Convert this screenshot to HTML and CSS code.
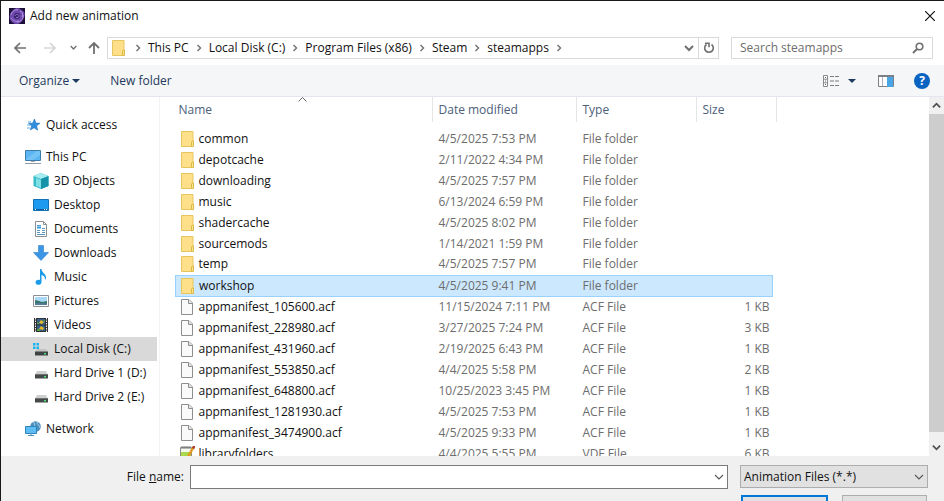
FILE: index.html
```
<!DOCTYPE html>
<html lang="en">

<head>
    <meta charset="UTF-8">
    <meta name="viewport" content="width=device-width, initial-scale=1.0">
    <title>Add new animation</title>
    <link rel="stylesheet" href="styles.css">
</head>

<body>
    <!-- shared icons -->
    <svg class="sprite" aria-hidden="true">
        <symbol id="folder" viewBox="0 0 14 16">
            <path d="M.5.5h11.500v15H.5z" fill="#ffe08a" stroke="#e6c65c" />
            <path d="M10.500 15.500v-4.500l1-1h1v5.500z" fill="#ffe38f" stroke="#dcb944" />
        </symbol>
        <symbol id="file" viewBox="0 0 12 16">
            <path d="M.5.5h7.500l3.500 3.500v11.500H.5z" fill="#fafafa" stroke="#8e8e8e" />
            <path d="M7.500.5v4h4" fill="#e4e4e4" stroke="#8e8e8e" />
        </symbol>
        <symbol id="drive" viewBox="0 0 16 16">
            <path d="M4 6h9l2 3.500H2z" fill="#cfcfcf" />
            <path d="M2 9h13v4.500H2z" fill="#45494a" />
            <path d="M2 9h13v1H2z" fill="#6d7172" />
            <path d="M11 11h2v1.500h-2z" fill="#45e07c" />
        </symbol>
        <symbol id="crumb" viewBox="0 0 8 8">
            <path d="M2.500 1l3 3-3 3" fill="none" stroke="#777" stroke-width="1.500" />
        </symbol>
        <symbol id="down" viewBox="0 0 10 10">
            <path d="M1 3l4 4 4-4" fill="none" stroke="currentColor" stroke-width="1.100" />
        </symbol>
        <symbol id="down-bold" viewBox="0 0 10 10">
            <path d="M1 3l4 4 4-4" fill="none" stroke="currentColor" stroke-width="2" />
        </symbol>
        <symbol id="triangle" viewBox="0 0 8 4">
            <path d="M0 0h8L4 4z" fill="#1e3a5f" />
        </symbol>
    </svg>

    <div class="dialog">
        <header class="title-bar">
            <svg class="app-icon" viewBox="0 0 16 16">
                <path d="M0 0h16v16H0z" fill="#1c1038" />
                <path d="M8 0c3 0 4 2 6 3s2 4 1 6-1 4-4 6-6 1-8-1-3-4-2-7 4-7 7-7z" fill="#6e48ad" />
                <path d="M2 7c0-3 4-6 7-5M14 7c1 3-2 7-6 7M2 10c2 3 5 4 8 3M11 3c3 1 3 4 2 6" fill="none" stroke="#b79be6" />
                <circle cx="8" cy="8" r="3" fill="#35206a" />
                <path d="M6 8c0-2 4-2 4 0s-3 2-3 1" fill="none" stroke="#9a78d2" />
            </svg>
            <h1>Add new animation</h1>
            <button class="close" aria-label="Close">
                <svg width="10" height="10" viewBox="0 0 10 10"><path d="M0 0l10 10M10 0L0 10" stroke="#111" stroke-width="1.200" /></svg>
            </button>
        </header>

        <nav class="nav-bar">
            <button class="nav-btn" aria-label="Back">
                <svg width="12" height="12" viewBox="0 0 12 12"><path d="M12 6H1M6 1L1 6l5 5" fill="none" stroke="#707070" stroke-width="1.700" /></svg>
            </button>
            <button class="nav-btn forward" aria-label="Forward" disabled>
                <svg width="12" height="12" viewBox="0 0 12 12"><path d="M0 6h11M6 1l5 5-5 5" fill="none" stroke="#d5d5d5" stroke-width="1.700" /></svg>
            </button>
            <button class="nav-btn recent" aria-label="Recent locations">
                <svg width="7" height="7"><use href="#down-bold" /></svg>
            </button>
            <button class="nav-btn up" aria-label="Up">
                <svg width="12" height="12" viewBox="0 0 12 12"><path d="M6 12V1M1 6l5-5 5 5" fill="none" stroke="#707070" stroke-width="1.800" /></svg>
            </button>
            <div class="address">
                <svg class="address-icon" width="14" height="16"><use href="#folder" /></svg>
                <svg class="sep"><use href="#crumb" /></svg>
                <a href="#">This PC</a>
                <svg class="sep"><use href="#crumb" /></svg>
                <a href="#">Local Disk (C:)</a>
                <svg class="sep"><use href="#crumb" /></svg>
                <a href="#">Program Files (x86)</a>
                <svg class="sep"><use href="#crumb" /></svg>
                <a href="#">Steam</a>
                <svg class="sep"><use href="#crumb" /></svg>
                <a href="#">steamapps</a>
                <svg class="sep"><use href="#crumb" /></svg>
                <button class="history" aria-label="Previous locations">
                    <svg width="10" height="10"><use href="#down-bold" /></svg>
                </button>
                <button class="refresh" aria-label="Refresh">
                    <svg width="12" height="12" viewBox="0 0 12 12">
                        <path d="M8.500 2.500a4.300 4.300 0 1 1-5 0" fill="none" stroke="#707070" stroke-width="1.600" />
                        <path d="M2 1.200h4v4" fill="none" stroke="#707070" stroke-width="1.600" />
                    </svg>
                </button>
            </div>
            <div class="search">
                <input type="text" placeholder="Search steamapps" aria-label="Search steamapps">
                <button aria-label="Search">
                    <svg width="12" height="12" viewBox="0 0 12 12"><circle cx="7.500" cy="4.500" r="3.300" fill="none" stroke="#707070" stroke-width="1.600" /><path d="M5 7L1 11" stroke="#707070" stroke-width="2" /></svg>
                </button>
            </div>
        </nav>

        <div class="toolbar">
            <button>Organize <svg width="8" height="4"><use href="#triangle" /></svg></button>
            <button class="new-folder">New folder</button>
            <button class="view" aria-label="Change your view">
                <svg width="16" height="12" viewBox="0 0 16 12">
                    <path d="M.5.5h4v11h-4zM.5 4.200h4M.5 7.800h4" fill="#fff" stroke="#8a8a8a" />
                    <path d="M2 2.500h1M2 6h1M2 9.500h1" stroke="#666" />
                    <path d="M7 1.500h4M12 1.500h4M7 6h4M12 6h4M7 10.500h4M12 10.500h4" stroke="#7b7b7b" />
                </svg>
                <svg width="8" height="4"><use href="#triangle" /></svg>
            </button>
            <button aria-label="Show the preview pane">
                <svg width="16" height="12" viewBox="0 0 16 12">
                    <path d="M.5.5h15v11H.5z" fill="#fff" stroke="#7b8087" />
                    <path d="M0 0h16v2H0z" fill="#7b8087" />
                    <path d="M4.500 2v9" stroke="#b0b5ba" />
                    <path d="M9 2h6v10H9z" fill="#49a5e6" />
                </svg>
            </button>
            <button class="help" aria-label="Get help">?</button>
        </div>

        <main class="content">
            <ul class="places">
                <li class="root"><a href="#">
                    <svg viewBox="0 0 16 16"><path d="M9.500 2l1.300 4 4.200.3-3.400 2.500 1 4.400-3.500-2.500L5.300 13l1.400-4L3.500 6.300l4.100-.1z" fill="#2d8fdd" stroke="#1c6fb8" stroke-width=".6" /><path d="M3 5h3M2 8h3M2 11h3" stroke="#5bb0ee" /></svg>
                    Quick access</a></li>
                <li class="root spaced"><a href="#">
                    <svg viewBox="0 0 16 16"><path d="M.5 1.500h15v10H.5z" fill="#5ab5f2" stroke="#3d7da9" /><path d="M1 10L12 2h3v4L8 11H1z" fill="#85cdfa" opacity=".6" /><path d="M6 12h4v1H6z" fill="#aaa" /><path d="M0 14.500h16" stroke="#8f9ba3" /></svg>
                    This PC</a></li>
                <li><a href="#">
                    <svg viewBox="0 0 16 16"><path d="M8 0l7.500 3v10L8 16 .5 13V3z" fill="#35bcc8" /><path d="M8 0l7.500 3L8 6 .5 3z" fill="#a7ecf0" /><path d="M8 6l7.500-3v10L8 16z" fill="#1593a9" /><path d="M3 5l5 2v8l-5-2z" fill="#7fe0e5" /></svg>
                    3D Objects</a></li>
                <li><a href="#">
                    <svg viewBox="0 0 16 16"><path d="M.5 2.500h15v11H.5z" fill="#1e9bf0" stroke="#1272b8" /><path d="M1 12.500h14" stroke="#0d5d9c" /><path d="M2 12.500h1M11 12.500h1M13 12.500h1" stroke="#fff" /></svg>
                    Desktop</a></li>
                <li><a href="#">
                    <svg viewBox="0 0 16 16"><path d="M2.500.5h8l3 3v12h-11z" fill="#fff" stroke="#8a8f94" /><path d="M10.500.5v3h3" fill="none" stroke="#8a8f94" /><path d="M4 4.500h4M4 9.500h3M9 9.500h3M4 11.500h3M9 11.500h3M4 13.500h8M9 7.500h3" stroke="#5c95be" /><path d="M4 6.500h4" stroke="#2b9ce6" stroke-width="2" /></svg>
                    Documents</a></li>
                <li><a href="#">
                    <svg viewBox="0 0 16 16"><path d="M5.500.5h5v7h5L8 15.500.5 7.500h5z" fill="#3d95e6" stroke="#2f7fc9" stroke-width=".6" /></svg>
                    Downloads</a></li>
                <li><a href="#">
                    <svg viewBox="0 0 16 16"><path d="M7 0h1.500c0 4 5 4.500 4.500 9-.2 1-.6 1.800-1.200 2.500.8-3-.8-5-3.300-5.500V13c0 4-6 3.500-6 .3 0-2 2.500-3.200 4.500-2.300z" fill="#1a9bea" /></svg>
                    Music</a></li>
                <li><a href="#">
                    <svg viewBox="0 0 16 16"><path d="M.5 2.500h15v11H.5z" fill="#fff" stroke="#8a9096" /><path d="M2 4h12v8H2z" fill="#a9d9f5" /><path d="M2 7l4 1 3 1 5-1v4H2z" fill="#39756f" /><path d="M2 10l12 .5V12H2z" fill="#557e9c" /></svg>
                    Pictures</a></li>
                <li><a href="#">
                    <svg viewBox="0 0 16 16"><path d="M1 1h14v14H1z" fill="#333" /><path d="M2.500 1v14M13.500 1v14" stroke="#eee" stroke-dasharray="1.500 1" /><path d="M4 2h8v5.500H4zM4 8.500h8V14H4z" fill="#35608c" /><path d="M6 6l2-3 3 2-2 2zM6 12l2-3 3 2-1 2z" fill="#e8b923" /><path d="M4 5l2 1v1H4zM4 12h3v2H4zM10 3h2v2z" fill="#4f9e45" /></svg>
                    Videos</a></li>
                <li class="current"><a href="#">
                    <svg viewBox="0 0 16 16"><path d="M4 8h9l2 3H2z" fill="#c4c4c4" /><path d="M2 10.500h13v4H2z" fill="#3f4344" /><path d="M11 12h2v1.500h-2z" fill="#45e07c" /><path d="M0 2h2.500v2.500H0zM3.500 2H6v2.500H3.500zM0 5.500h2.500V8H0zM3.500 5.500H6V8H3.500z" fill="#18b4ef" /></svg>
                    Local Disk (C:)</a></li>
                <li><a href="#"><svg><use href="#drive" /></svg> Hard Drive 1 (D:)</a></li>
                <li><a href="#"><svg><use href="#drive" /></svg> Hard Drive 2 (E:)</a></li>
                <li class="root spaced"><a href="#">
                    <svg viewBox="0 0 16 16"><circle cx="10.500" cy="5.500" r="5.300" fill="#4c8fbd" /><path d="M8 1c2 1 2 3 1 5l-3 1M12 1c0 3 3 3 3 6" fill="none" stroke="#a8d3ea" /><path d="M.5 5.500h11v7H.5z" fill="#5ebcf5" stroke="#2f83b8" /><path d="M3 14.500h6M6 12v2" stroke="#4f93bd" /></svg>
                    Network</a></li>
            </ul>

            <div class="files">
                <table>
                    <colgroup>
                        <col class="col-name">
                        <col class="col-date">
                        <col class="col-type">
                        <col class="col-size">
                        <col class="col-end">
                    </colgroup>
                    <thead>
                        <tr>
                            <th><div class="sorted">Name
                                <svg class="sort-mark" width="9" height="5" viewBox="0 0 9 5"><path d="M.5 4.500l4-4 4 4" fill="none" stroke="#666" /></svg>
                            </div></th>
                            <th><div>Date modified</div></th>
                            <th><div>Type</div></th>
                            <th colspan="2"><div>Size</div></th>
                        </tr>
                    </thead>
                    <tbody>
                        <tr><td><span class="name"><svg class="ico-folder"><use href="#folder" /></svg>common</span></td><td>4/5/2025 7:53 PM</td><td>File folder</td><td></td></tr>
                        <tr><td><span class="name"><svg class="ico-folder"><use href="#folder" /></svg>depotcache</span></td><td>2/11/2022 4:34 PM</td><td>File folder</td><td></td></tr>
                        <tr><td><span class="name"><svg class="ico-folder"><use href="#folder" /></svg>downloading</span></td><td>4/5/2025 7:57 PM</td><td>File folder</td><td></td></tr>
                        <tr><td><span class="name"><svg class="ico-folder"><use href="#folder" /></svg>music</span></td><td>6/13/2024 6:59 PM</td><td>File folder</td><td></td></tr>
                        <tr><td><span class="name"><svg class="ico-folder"><use href="#folder" /></svg>shadercache</span></td><td>4/5/2025 8:02 PM</td><td>File folder</td><td></td></tr>
                        <tr><td><span class="name"><svg class="ico-folder"><use href="#folder" /></svg>sourcemods</span></td><td>1/14/2021 1:59 PM</td><td>File folder</td><td></td></tr>
                        <tr><td><span class="name"><svg class="ico-folder"><use href="#folder" /></svg>temp</span></td><td>4/5/2025 7:57 PM</td><td>File folder</td><td></td></tr>
                        <tr class="selected"><td><span class="name"><svg class="ico-folder"><use href="#folder" /></svg>workshop</span></td><td>4/5/2025 9:41 PM</td><td>File folder</td><td></td></tr>
                        <tr><td><span class="name"><svg class="ico-file"><use href="#file" /></svg>appmanifest_105600.acf</span></td><td>11/15/2024 7:11 PM</td><td>ACF File</td><td>1 KB</td></tr>
                        <tr><td><span class="name"><svg class="ico-file"><use href="#file" /></svg>appmanifest_228980.acf</span></td><td>3/27/2025 7:24 PM</td><td>ACF File</td><td>3 KB</td></tr>
                        <tr><td><span class="name"><svg class="ico-file"><use href="#file" /></svg>appmanifest_431960.acf</span></td><td>2/19/2025 6:43 PM</td><td>ACF File</td><td>1 KB</td></tr>
                        <tr><td><span class="name"><svg class="ico-file"><use href="#file" /></svg>appmanifest_553850.acf</span></td><td>4/4/2025 5:58 PM</td><td>ACF File</td><td>2 KB</td></tr>
                        <tr><td><span class="name"><svg class="ico-file"><use href="#file" /></svg>appmanifest_648800.acf</span></td><td>10/25/2023 3:45 PM</td><td>ACF File</td><td>1 KB</td></tr>
                        <tr><td><span class="name"><svg class="ico-file"><use href="#file" /></svg>appmanifest_1281930.acf</span></td><td>4/5/2025 7:53 PM</td><td>ACF File</td><td>1 KB</td></tr>
                        <tr><td><span class="name"><svg class="ico-file"><use href="#file" /></svg>appmanifest_3474900.acf</span></td><td>4/5/2025 9:33 PM</td><td>ACF File</td><td>1 KB</td></tr>
                        <tr><td><span class="name"><svg class="ico-note" viewBox="0 0 16 16"><path d="M1.500 1.500h11v14h-11z" fill="#f4f8ee" stroke="#8b8b8b" /><path d="M2 6h10v9H2z" fill="#a9d94c" /><path d="M3 0v3M5 0v3M7 0v3M9 0v3M11 0v3" stroke="#777" /><path d="M14.500 1L8.500 12" stroke="#e59a1c" stroke-width="2.500" /><path d="M15.500 0l-1.500 2.500" stroke="#b03a2e" stroke-width="2.500" /></svg>libraryfolders</span></td><td>4/4/2025 5:55 PM</td><td>VDF File</td><td>6 KB</td></tr>
                    </tbody>
                </table>
            </div>

            <div class="scrollbar">
                <button aria-label="Scroll up"><svg class="flip" width="9" height="9"><use href="#down-bold" /></svg></button>
                <div class="thumb"></div>
                <button class="scroll-down" aria-label="Scroll down"><svg width="9" height="9"><use href="#down-bold" /></svg></button>
            </div>
        </main>

        <footer class="footer">
            <label for="filename">File <u>n</u>ame:</label>
            <div class="combo">
                <input type="text" id="filename">
                <button aria-label="Show recent names"><svg width="10" height="10"><use href="#down" /></svg></button>
            </div>
            <div class="actions">
                <div class="filter">
                    <select aria-label="File type">
                        <option>Animation Files (*.*)</option>
                    </select>
                    <svg width="10" height="10"><use href="#down" /></svg>
                </div>
                <div class="buttons">
                    <button class="primary" aria-label="Open"></button>
                    <button aria-label="Cancel"></button>
                </div>
            </div>
        </footer>
    </div>
</body>

</html>
```
FILE: styles.css
```
* {
    box-sizing: border-box;
}

body {
    margin: 0;
    font-family: "Open Sans", "Noto Sans", sans-serif;
    font-size: 12px;
    line-height: 16px;
    color: #111;
}

button,
input,
select {
    font: inherit;
    color: inherit;
    margin: 0;
    padding: 0;
    border: none;
    background: none;
}

a {
    color: inherit;
    text-decoration: none;
}

svg {
    flex: none;
}

.sprite {
    display: none;
}

.dialog {
    display: flex;
    flex-direction: column;
    height: 100vh;
    overflow: hidden;
    border-top: 1px solid #1b181c;
    border-left: 1px solid #1b181c;
    background: #fff;
}

/* title bar */
.title-bar {
    display: flex;
    align-items: center;
    flex: none;
    height: 29px;
    padding: 0 8px;
}

.app-icon {
    width: 16px;
    height: 16px;
}

.title-bar h1 {
    flex: 1;
    margin: 0 0 0 5px;
    font-size: 12px;
    font-weight: normal;
}

.close {
    display: flex;
    padding: 1px;
}

/* navigation */
.nav-bar {
    display: flex;
    align-items: center;
    flex: none;
    height: 35px;
    padding: 0 11px 0 13px;
    color: #707070;
}

.nav-btn {
    display: flex;
    justify-content: center;
    width: 12px;
}

.forward {
    margin-left: 18px;
}

.recent {
    margin-left: 11px;
}

.up {
    margin-left: 9px;
}

.address {
    display: flex;
    align-items: center;
    flex: 1;
    height: 22px;
    margin: 0 12px 0 7px;
    border: 1px solid #d9d9d9;
    white-space: nowrap;
    overflow: hidden;
}

.address a {
    color: #111;
}

.address-icon {
    margin: 0 2px 0 4px;
}

.sep {
    width: 20px;
    height: 8px;
}

.history {
    display: flex;
    margin-left: auto;
    padding: 5px 4px;
}

.refresh {
    display: flex;
    align-items: center;
    justify-content: center;
    width: 20px;
    height: 20px;
    border-left: 1px solid #d9d9d9;
}

.search {
    display: flex;
    align-items: center;
    width: 202px;
    height: 22px;
    padding: 0 8px;
    border: 1px solid #d9d9d9;
}

.search input {
    flex: 1;
    min-width: 0;
    outline: none;
}

.search input::placeholder {
    color: #6d6d6d;
    opacity: 1;
}

.search button {
    display: flex;
}

/* toolbar */
.toolbar {
    display: flex;
    align-items: center;
    flex: none;
    height: 32px;
    padding: 0 14px 0 18px;
    border-bottom: 1px solid #e3e6ec;
    background: #f5f6f7;
    color: #1e395b;
}

.toolbar button {
    display: flex;
    align-items: center;
    gap: 3px;
}

.toolbar .new-folder {
    margin-left: 30px;
}

.toolbar .view {
    gap: 9px;
    margin: 0 22px 0 auto;
}

.toolbar .help {
    justify-content: center;
    width: 16px;
    height: 16px;
    margin-left: 20px;
    border-radius: 50%;
    background: #0a63c2;
    color: #fff;
    font-weight: bold;
}

/* content */
.content {
    display: flex;
    flex: 1;
    min-height: 0;
}

.places {
    flex: none;
    width: 159px;
    margin: 0;
    padding: 16px 2px 0 0;
    border-right: 1px solid #f3f3f3;
    list-style: none;
}

.places a {
    display: flex;
    align-items: center;
    gap: 5px;
    height: 24px;
    padding-left: 32px;
    white-space: nowrap;
}

.places .root a {
    padding-left: 24px;
}

.places svg {
    width: 16px;
    height: 16px;
}

.spaced {
    margin-top: 8px;
}

.current {
    background: #d9d9d9;
}

.files {
    flex: 1;
    padding-left: 15px;
    overflow: hidden;
}

table {
    width: 601px;
    table-layout: fixed;
    border-collapse: collapse;
}

.col-name {
    width: 257px;
}

.col-date {
    width: 144px;
}

.col-type {
    width: 120px;
}

.col-size {
    width: 76px;
}

.col-end {
    width: 4px;
}

th {
    height: 31px;
    padding: 0;
    color: #4c607a;
    font-weight: normal;
    text-align: left;
    vertical-align: top;
}

th div {
    height: 25px;
    padding: 5px 6px 0;
    border-right: 1px solid #e5e5e5;
}

th:first-child div {
    padding-left: 3px;
}

.sorted {
    position: relative;
}

/* sits on the top edge of the sorted column */
.sort-mark {
    position: absolute;
    top: 0;
    left: 50%;
    margin-left: -6px;
}

td {
    height: 21px;
    padding: 0 3px 0 6px;
    color: #6d6d6d;
    white-space: nowrap;
}

td:first-child {
    padding-left: 5px;
    color: #111;
}

td:last-child {
    text-align: right;
}

.name {
    display: flex;
    align-items: center;
}

.name svg {
    width: 14px;
    height: 16px;
    margin-right: 4px;
}

.name .ico-file {
    width: 12px;
    margin-right: 6px;
}

.name .ico-note {
    width: 16px;
    margin: 0 4px 0 -2px;
}

.selected td {
    background: #cce8ff;
    border-top: 1px solid #99d1ff;
    border-bottom: 1px solid #99d1ff;
}

.selected td:first-child {
    border-left: 1px solid #99d1ff;
}

.selected td:last-child {
    border-right: 1px solid #99d1ff;
}

.scrollbar {
    display: flex;
    flex-direction: column;
    flex: none;
    width: 15px;
    background: #f0f0f0;
    color: #505050;
}

.scrollbar button {
    display: flex;
    align-items: center;
    justify-content: center;
    height: 17px;
}

.scrollbar .scroll-down {
    margin-top: auto;
}

.flip {
    transform: rotate(180deg);
}

.thumb {
    flex: 0 1 318px;
    background: #cdcdcd;
}

/* footer */
.footer {
    display: flex;
    align-items: flex-start;
    flex: none;
    height: 45px;
    padding: 9px 16px 0 0;
    background: #f0f0f0;
}

.footer label {
    width: 183px;
    padding-top: 4px;
    text-align: right;
}

.combo {
    display: flex;
    align-items: center;
    flex: 1;
    height: 24px;
    margin: 0 12px 0 6px;
    padding: 0 3px;
    border: 1px solid #7a7a7a;
    background: #fff;
}

.combo input {
    flex: 1;
    min-width: 0;
    outline: none;
}

.combo button {
    display: flex;
    color: #555;
}

.actions {
    width: 188px;
}

.filter {
    display: flex;
    align-items: center;
    height: 23px;
    padding: 0 3px;
    border: 1px solid #adadad;
    background: #e1e1e1;
}

.filter svg {
    color: #555;
}

.filter select {
    flex: 1;
    appearance: none;
    outline: none;
}

.buttons {
    display: flex;
    gap: 14px;
    padding: 7px 1px 0;
}

.buttons button {
    flex: 1;
    height: 23px;
    border: 1px solid #adadad;
    background: #e1e1e1;
}

.buttons .primary {
    border: 2px solid #0078d7;
}
```
